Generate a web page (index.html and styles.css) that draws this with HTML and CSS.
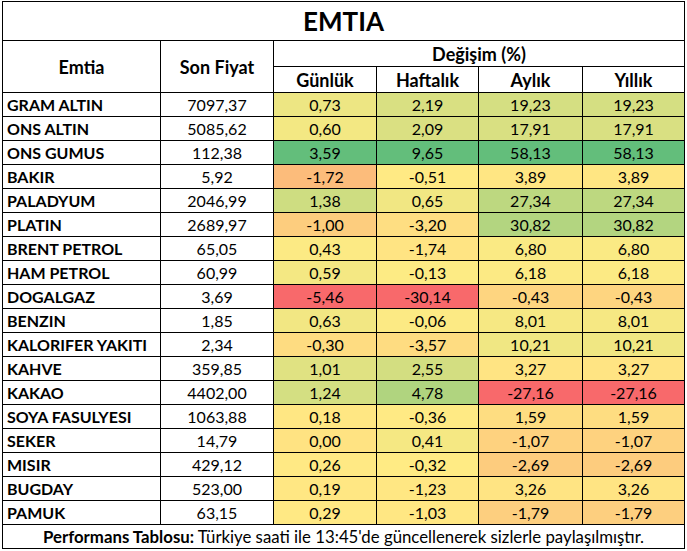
FILE: index.html
```html
<!DOCTYPE html>
<html lang="tr">
<head>
<meta charset="utf-8">
<title>EMTIA</title>
<link rel="stylesheet" href="styles.css">
</head>
<body>
<table class="perf">
  <colgroup>
    <col class="c-name"><col class="c-price"><col class="c-d"><col class="c-w"><col class="c-m"><col class="c-y">
  </colgroup>
  <thead>
    <tr class="r-title"><th colspan="6" class="title">EMTIA</th></tr>
    <tr class="r-h1">
      <th rowspan="2">Emtia</th>
      <th rowspan="2">Son Fiyat</th>
      <th colspan="4">Değişim (%)</th>
    </tr>
    <tr class="r-h2"><th>Günlük</th><th>Haftalık</th><th>Aylık</th><th>Yıllık</th></tr>
  </thead>
  <tbody>
    <tr><td class="name">GRAM ALTIN</td><td>7097,37</td><td style="background:#ede683">0,73</td><td style="background:#d9e082">2,19</td><td style="background:#d5df82">19,23</td><td style="background:#d5df82">19,23</td></tr>
    <tr><td class="name">ONS ALTIN</td><td>5085,62</td><td style="background:#f3e883">0,60</td><td style="background:#dae082">2,09</td><td style="background:#d9e082">17,91</td><td style="background:#d9e082">17,91</td></tr>
    <tr><td class="name">ONS GUMUS</td><td>112,38</td><td style="background:#63be7b">3,59</td><td style="background:#63be7b">9,65</td><td style="background:#63be7b">58,13</td><td style="background:#63be7b">58,13</td></tr>
    <tr><td class="name">BAKIR</td><td>5,92</td><td style="background:#fcbc7b">-1,72</td><td style="background:#ffea84">-0,51</td><td style="background:#ffe683">3,89</td><td style="background:#ffe683">3,89</td></tr>
    <tr><td class="name">PALADYUM</td><td>2046,99</td><td style="background:#cedd81">1,38</td><td style="background:#f1e783">0,65</td><td style="background:#bdd880">27,34</td><td style="background:#bdd880">27,34</td></tr>
    <tr><td class="name">PLATIN</td><td>2689,97</td><td style="background:#fdcd7e">-1,00</td><td style="background:#fede82">-3,20</td><td style="background:#b3d580">30,82</td><td style="background:#b3d580">30,82</td></tr>
    <tr><td class="name">BRENT PETROL</td><td>65,05</td><td style="background:#fcea84">0,43</td><td style="background:#ffe483">-1,74</td><td style="background:#faea84">6,80</td><td style="background:#faea84">6,80</td></tr>
    <tr><td class="name">HAM PETROL</td><td>60,99</td><td style="background:#f4e883">0,59</td><td style="background:#fdeb84">-0,13</td><td style="background:#fcea84">6,18</td><td style="background:#fcea84">6,18</td></tr>
    <tr><td class="name">DOGALGAZ</td><td>3,69</td><td style="background:#f8696b">-5,46</td><td style="background:#f8696b">-30,14</td><td style="background:#fed580">-0,43</td><td style="background:#fed580">-0,43</td></tr>
    <tr><td class="name">BENZIN</td><td>1,85</td><td style="background:#f2e783">0,63</td><td style="background:#fcea84">-0,06</td><td style="background:#f6e883">8,01</td><td style="background:#f6e883">8,01</td></tr>
    <tr><td class="name">KALORIFER YAKITI</td><td>2,34</td><td style="background:#fedc81">-0,30</td><td style="background:#fedc81">-3,57</td><td style="background:#f0e783">10,21</td><td style="background:#f0e783">10,21</td></tr>
    <tr><td class="name">KAHVE</td><td>359,85</td><td style="background:#e0e282">1,01</td><td style="background:#d3de81">2,55</td><td style="background:#ffe483">3,27</td><td style="background:#ffe483">3,27</td></tr>
    <tr><td class="name">KAKAO</td><td>4402,00</td><td style="background:#d4df82">1,24</td><td style="background:#b0d47f">4,78</td><td style="background:#f8696b">-27,16</td><td style="background:#f8696b">-27,16</td></tr>
    <tr><td class="name">SOYA FASULYESI</td><td>1063,88</td><td style="background:#ffe783">0,18</td><td style="background:#ffea84">-0,36</td><td style="background:#fedd81">1,59</td><td style="background:#fedd81">1,59</td></tr>
    <tr><td class="name">SEKER</td><td>14,79</td><td style="background:#ffe382">0,00</td><td style="background:#f5e883">0,41</td><td style="background:#fed27f">-1,07</td><td style="background:#fed27f">-1,07</td></tr>
    <tr><td class="name">MISIR</td><td>429,12</td><td style="background:#ffe984">0,26</td><td style="background:#ffeb84">-0,32</td><td style="background:#fdcc7e">-2,69</td><td style="background:#fdcc7e">-2,69</td></tr>
    <tr><td class="name">BUGDAY</td><td>523,00</td><td style="background:#ffe783">0,19</td><td style="background:#ffe783">-1,23</td><td style="background:#ffe483">3,26</td><td style="background:#ffe483">3,26</td></tr>
    <tr><td class="name">PAMUK</td><td>63,15</td><td style="background:#ffe984">0,29</td><td style="background:#ffe783">-1,03</td><td style="background:#fdcf7f">-1,79</td><td style="background:#fdcf7f">-1,79</td></tr>
  </tbody>
  <tfoot>
    <tr class="r-foot"><td colspan="6" class="foot"><b>Performans Tablosu:</b> Türkiye saati ile 13:45'de güncellenerek sizlerle paylaşılmıştır.</td></tr>
  </tfoot>
</table>
</body>
</html>
```
FILE: styles.css
```css
html, body {
  margin: 0;
  padding: 0;
  background: #ffffff;
}
body {
  padding: 1px 0 0 2px;
  font-family: Lato, "Liberation Sans", sans-serif;
  color: #000;
}
.perf {
  border-collapse: collapse;
  table-layout: fixed;
  width: 683px;
  font-size: 16px;
}
.c-name { width: 158px; }
.c-price { width: 113px; }
.c-d { width: 103px; }
.c-w { width: 102px; }
.c-m { width: 104px; }
.c-y { width: 102px; }
.perf th,
.perf td {
  border: 1px solid #000;
  padding: 0;
  text-align: center;
  vertical-align: middle;
  white-space: nowrap;
  overflow: hidden;
}
.perf th { font-weight: 700; font-size: 18px; }
.r-title { height: 39px; }
.perf th.title { font-size: 26px; font-weight: 700; }
.r-h1 { height: 26px; }
.r-h2 { height: 26px; }
.perf tbody tr { height: 24px; }
.perf td.name {
  text-align: left;
  padding-left: 4px;
  font-weight: 700;
}
.r-foot { height: 24px; }
.perf td.foot { font-size: 16.8px; }
.foot b { font-weight: 700; }
```
